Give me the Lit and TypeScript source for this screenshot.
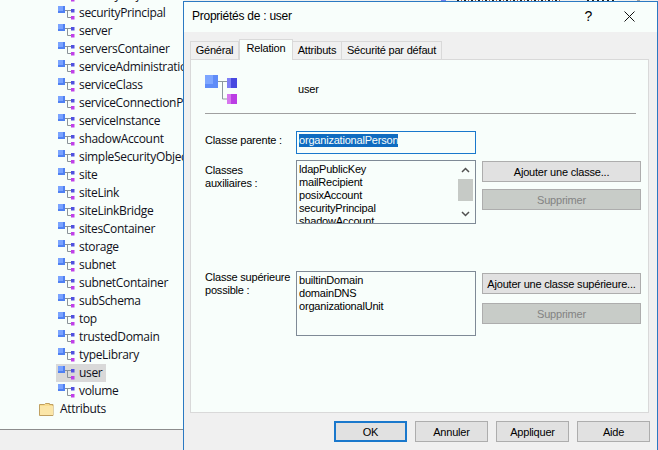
import { LitElement, html, css, svg } from "lit";
import { customElement } from "lit/decorators.js";

const classIcon = () => html`<svg class="ci" width="20" height="18" viewBox="0 0 20 18">
  <path d="M7 6.500H13M9.500 6.500V13.500H13" fill="none" stroke="#8a9299" stroke-width="1"/>
  <rect x="0" y="2" width="7" height="7" fill="#7aa3ff"/>
  <rect x="0" y="7" width="7" height="2" fill="#4f80f2"/>
  <rect x="5" y="2" width="2" height="7" fill="#4f80f2"/>
  <rect x="13" y="5" width="3.500" height="3.500" fill="#5050e0"/>
  <rect x="13" y="12" width="3.500" height="3.500" fill="#c040e8"/>
</svg>`;

const bigIcon = svg`<svg class="big" width="33" height="30" viewBox="0 0 33 30">
  <path d="M13 6.500H22M17.500 6.500V24H22" fill="none" stroke="#8d979e" stroke-width="1"/>
  <rect x="0" y="0" width="13" height="13" fill="#7ea6ff"/>
  <rect x="8" y="0" width="5" height="13" fill="#5f8cf8"/>
  <rect x="0" y="9" width="13" height="4" fill="#5f8cf8"/>
  <rect x="22" y="3" width="10" height="10" fill="#7f7ff5"/>
  <rect x="26" y="3" width="6" height="10" fill="#4848e0"/>
  <rect x="22" y="19" width="10" height="10" fill="#d777ee"/>
  <rect x="26" y="19" width="6" height="10" fill="#bb3de4"/>
</svg>`;

const rows = ["securityObject","securityPrincipal","server","serversContainer","serviceAdministrationPoint","serviceClass","serviceConnectionPoint","serviceInstance","shadowAccount","simpleSecurityObject","site","siteLink","siteLinkBridge","sitesContainer","storage","subnet","subnetContainer","subSchema","top","trustedDomain","typeLibrary","user","volume"];

@customElement("app-root")
export class AppRoot extends LitElement {
  static styles = css`
    :host { display: block; position: relative; width: 658px; height: 450px; overflow: hidden; background: #f0f0f0; }
    .tree { height: 430px; box-sizing: border-box; width: 184px; background: #f8fefb; border-bottom: 1px solid #8c8c8c; overflow: hidden;
      font: 12px "Open Sans", sans-serif; color: #101020; }
    .list { margin-top: -14px; }
    .row { height: 18px; display: flex; padding-left: 56px; }
    .item { display: flex; align-items: center; height: 18px; padding: 0 4px 0 2px; }
    .item.sel { background: #d9d9d9; }
    .ci { flex: none; margin-right: 1px; }
    .name { letter-spacing: -0.33px; white-space: nowrap; line-height: 18px; }
    .folder-row { padding-left: 39px; align-items: center; }
    .folder-row svg { margin-right: 6px; flex: none; }
    .strip { position: absolute; left: 441px; top: 0; width: 200px; height: 1px; overflow: hidden; display: flex; }
    .strip i { display: block; height: 1px; }
    .s1 { width: 5px; background: #6f7ff0; margin-right: 11px; }
    .s2 { width: 103px; background: repeating-linear-gradient(90deg, #222 0 2px, #f8fefb 2px 4px, #a05030 4px 5px, #f8fefb 5px 7px); margin-right: 27px; }
    .s3 { width: 30px; background: repeating-linear-gradient(90deg, #222 0 2px, #f8fefb 2px 5px); margin-right: 20px; }
    .s4 { width: 3px; background: #a0a0a0; }
    .dialog { position: absolute; left: 183px; top: 1px; width: 475px; height: 449px; box-sizing: border-box; border: 1px solid #2b79c2; border-bottom: none; background: #f0f0f0;
      font: 11px "Liberation Sans", sans-serif; letter-spacing: -0.2px; color: #000; display: flex; flex-direction: column; }
    .title { height: 30px; flex: none; background: #f8fefb; display: flex; align-items: center; padding: 0 22px 2px 8px; box-sizing: border-box; font-size: 12px; letter-spacing: -0.25px; }
    .title .t { flex: 1; }
    .help { font: 14px "Liberation Sans", sans-serif; margin-right: 32px; }
    .tabs { display: flex; margin: 7px 0 0 6px; height: 20px; align-items: flex-end; position: relative; z-index: 1; }
    .tab { height: 18px; box-sizing: border-box; border: 1px solid #d9d9d9; border-bottom: none; border-left: none; text-align: center; line-height: 16px; background: #f0f0f0; }
    .tab:nth-child(1) { width: 49px; border-left: 1px solid #d9d9d9; }
    .tab:nth-child(2) { width: 54px; }
    .tab:nth-child(3) { width: 49px; }
    .tab:nth-child(4) { width: 100px; }
    .tab.on { height: 21px; background: #f8fefb; line-height: 16px; margin-bottom: -1px; border-left: 1px solid #d9d9d9; position: relative; z-index: 2; }
    .panel { margin: 0 8px 0 6px; height: 354px; box-sizing: border-box; background: #f8fefb; border: 1px solid #d9d9d9; padding: 15px 12px 0 14px; }
    .head { display: flex; align-items: flex-start; height: 39px; box-sizing: border-box; border-bottom: 1px solid #a0a0a0; }
    .head .big { flex: none; }
    .head .u { margin: 8px 0 0 60px; }
    .grid { display: grid; grid-template-columns: 91px 180px 165px; margin-top: 17px; }
    .lab { line-height: 13px; padding-top: 3px; }
    .lab2 { margin-top: 7px; }
    .lab3 { margin-top: 44px; }
    .inp { height: 23px; box-sizing: border-box; border: 1px solid #1a78cc; padding: 2px 0 0 2px; }
    .inp span { background: #0f6bc0; color: #f8fefb; display: inline-block; line-height: 13px; height: 13px; }
    .lb { box-sizing: border-box; border: 1px solid #7f8a96; background: #f8fefb; padding: 2px 0 0 2px; line-height: 13px; overflow: hidden; position: relative; }
    .lb2 { height: 64px; margin-top: 6px; }
    .lb3 { height: 65px; margin-top: 47px; }
    .sb { position: absolute; right: 1px; top: 0; bottom: 0; width: 16px; display: flex; flex-direction: column; }
    .sb i { display: block; height: 18px; padding-left: 3px; }
    .sb .th { width: 15px; height: 22px; background: #c6cac6; }
    .sb .sp { flex: 1; }
    .btns { padding-left: 6px; display: flex; flex-direction: column; }
    .btns2 { margin-top: 7px; gap: 7px; }
    .btns3 { margin-top: 49px; gap: 9px; }
    .btn { width: 159px; height: 21px; box-sizing: border-box; border: 1px solid #adadad; background: #e1e1e1; display: flex; align-items: center; justify-content: center; color: #000; }
    .btn.dis { background: #c8ccc8; color: #838383; }
    .foot { display: flex; gap: 8px; margin: 8px 0 0 150px; }
    .foot .btn { width: 73px; }
    .btn.def { border: 2px solid #1a78cc; }
    .x { flex: none; }
  `;

  render() {
    return html`
      <div class="tree"><div class="list">
        ${rows.map(r => html`<div class="row"><div class="item ${r === "user" ? "sel" : ""}">${classIcon()}<span class="name">${r}</span></div></div>`)}
        <div class="row folder-row">
          <svg width="15" height="14" viewBox="0 0 15 14"><path d="M.5 2.500h5l1-1h4v1h3.500v11H.5z" fill="#f8dc8e" stroke="#c0a060"/><rect x="1" y="4" width="13" height="9" fill="#fbe6a8"/></svg>
          <span class="name">Attributs</span>
        </div>
      </div></div>
      <div class="strip"><i class="s1"></i><i class="s2"></i><i class="s3"></i><i class="s4"></i></div>
      <div class="dialog">
        <div class="title">
          <span class="t">Propriétés de : user</span>
          <span class="help">?</span>
          <svg class="x" width="11" height="11" viewBox="0 0 11 11"><path d="M.5 .5l10 10M10.500 .5l-10 10" stroke="#111" stroke-width="1" fill="none"/></svg>
        </div>
        <div class="tabs">
          <div class="tab">Général</div><div class="tab on">Relation</div><div class="tab">Attributs</div><div class="tab">Sécurité par défaut</div>
        </div>
        <div class="panel">
          <div class="head">${bigIcon}<span class="u">user</span></div>
          <div class="grid">
            <div class="lab">Classe parente :</div>
            <div class="inp"><span>organizationalPerson</span></div>
            <div></div>
            <div class="lab lab2">Classes<br />auxiliaires :</div>
            <div class="lb lb2">ldapPublicKey<br />mailRecipient<br />posixAccount<br />securityPrincipal<br />shadowAccount
              <div class="sb">
                <i><svg width="9" height="18" viewBox="0 0 9 18"><path d="M1 11l3.500-3.500L8 11" fill="none" stroke="#505050" stroke-width="1.500"/></svg></i>
                <div class="th"></div><div class="sp"></div>
                <i><svg width="9" height="18" viewBox="0 0 9 18"><path d="M1 7l3.500 3.500L8 7" fill="none" stroke="#505050" stroke-width="1.500"/></svg></i>
              </div>
            </div>
            <div class="btns btns2">
              <div class="btn">Ajouter une classe...</div>
              <div class="btn dis">Supprimer</div>
            </div>
            <div class="lab lab3">Classe supérieure<br />possible :</div>
            <div class="lb lb3">builtinDomain<br />domainDNS<br />organizationalUnit</div>
            <div class="btns btns3">
              <div class="btn">Ajouter une classe supérieure...</div>
              <div class="btn dis">Supprimer</div>
            </div>
          </div>
        </div>
        <div class="foot">
          <div class="btn def">OK</div><div class="btn">Annuler</div><div class="btn">Appliquer</div><div class="btn">Aide</div>
        </div>
      </div>`;
  }
}
